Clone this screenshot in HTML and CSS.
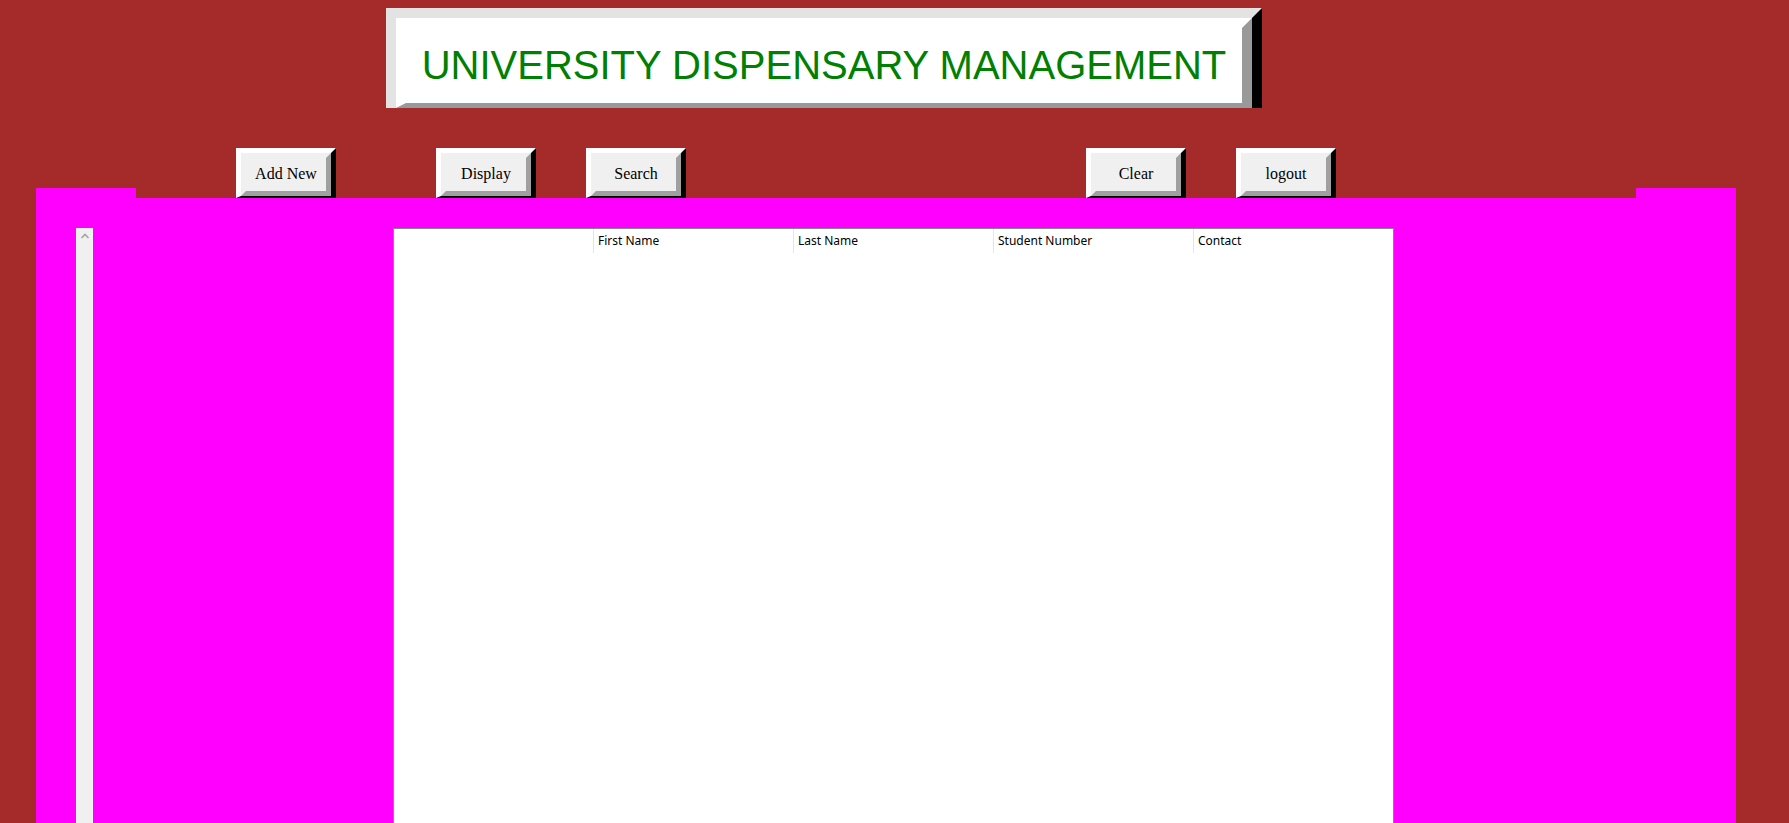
FILE: index.html
```html
<!DOCTYPE html>
<html>
<head>
<meta charset="utf-8">
<title>University Dispensary Management</title>
<link rel="stylesheet" href="styles.css">
</head>
<body>
<header class="header">
  <div class="title-outer">
    <div class="title-inner">
      <h1 class="title-text">UNIVERSITY DISPENSARY MANAGEMENT</h1>
    </div>
  </div>
</header>
<div class="toolbar">
  <div class="tab"></div>
  <div class="buttons">
    <button class="btn btn-add"><span class="btn-face">Add New</span></button>
    <button class="btn btn-display"><span class="btn-face">Display</span></button>
    <button class="btn btn-search"><span class="btn-face">Search</span></button>
    <button class="btn btn-clear"><span class="btn-face">Clear</span></button>
    <button class="btn btn-logout"><span class="btn-face">logout</span></button>
  </div>
  <div class="tab"></div>
</div>
<main class="panel">
  <div class="scrollbar">
    <svg class="scroll-arrow" width="16" height="16" viewBox="0 0 16 16">
      <path d="M4.5 10 L8 6.5 L11.5 10" fill="none" stroke="#a3a3a3" stroke-width="1.6"/>
    </svg>
  </div>
  <div class="table">
    <div class="thead">
      <div class="th"></div>
      <div class="th">First Name</div>
      <div class="th">Last Name</div>
      <div class="th">Student Number</div>
      <div class="th last">Contact</div>
    </div>
  </div>
</main>
</body>
</html>
```
FILE: styles.css
```css
html, body {
  margin: 0;
  padding: 0;
}
body {
  background: #a52a2a;
  height: 100vh;
  overflow: hidden;
  display: flex;
  flex-direction: column;
}
.header {
  padding: 8px 0 0 386px;
}
.title-outer {
  width: 876px;
  height: 100px;
  box-sizing: border-box;
  border-style: solid;
  border-width: 10px 10px 0 10px;
  border-color: #e3e3e3 #000 #000 #e3e3e3;
}
.title-inner {
  height: 100%;
  box-sizing: border-box;
  border-style: solid;
  border-width: 10px 10px 5px 10px;
  border-color: #fff #999 #999 #fff;
  background: #fff;
  display: flex;
  align-items: center;
  justify-content: center;
}
.title-text {
  margin: 0;
  font-family: "Liberation Sans", Arial, sans-serif;
  font-weight: normal;
  font-size: 40px;
  line-height: 1;
  color: #008000;
  white-space: nowrap;
  padding-bottom: 1px;
}
.toolbar {
  margin: 40px 0 0 36px;
  width: 1700px;
  height: 50px;
  display: flex;
}
.tab {
  width: 100px;
  background: linear-gradient(to bottom, transparent 40px, #ff00ff 40px);
}
.buttons {
  flex: 1;
  display: flex;
  align-items: flex-start;
  padding-left: 100px;
}
.btn {
  width: 100px;
  height: 50px;
  box-sizing: border-box;
  padding: 0;
  margin: 0;
  border-style: solid;
  border-width: 5px 5px 2px 5px;
  border-color: #fff #000 #000 #fff;
  background: #f0f0f0;
  cursor: pointer;
  display: block;
}
.btn-face {
  display: flex;
  align-items: center;
  justify-content: center;
  height: 100%;
  box-sizing: border-box;
  border-style: solid;
  border-width: 5px;
  border-color: #f0f0f0 #a0a0a0 #a0a0a0 #f0f0f0;
  font-family: "Liberation Serif", "Times New Roman", serif;
  font-size: 16px;
  color: #000;
  padding-bottom: 2px;
}
.btn-display { margin-left: 100px; }
.btn-search { margin-left: 50px; }
.btn-clear { margin-left: 400px; }
.btn-logout { margin-left: 50px; }
.panel {
  flex: 1;
  margin-left: 36px;
  width: 1700px;
  background: #ff00ff;
  display: flex;
  align-items: stretch;
  padding: 30px 0 0 40px;
  box-sizing: border-box;
  gap: 300px;
}
.scrollbar {
  width: 17px;
  box-sizing: border-box;
  border-left: 1px solid #fff;
  background: #f0f0f0;
}
.scroll-arrow {
  display: block;
}
.table {
  width: 1001px;
  box-sizing: border-box;
  border: 1px solid #828790;
  border-bottom: none;
  background: #fff;
}
.thead {
  display: grid;
  grid-template-columns: 200px 200px 200px 200px 1fr;
  height: 24px;
}
.th {
  border-right: 1px solid #e5e5e5;
  font-family: "Noto Sans", "Open Sans", sans-serif;
  font-size: 12px;
  color: #000;
  padding-left: 4px;
  line-height: 24px;
  white-space: nowrap;
}
.th.last {
  border-right: none;
}
```
